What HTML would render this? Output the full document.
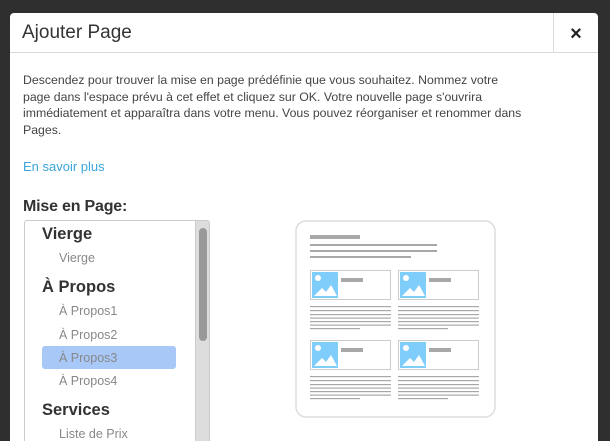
<!DOCTYPE html>
<html style="width:610px;height:441px;overflow:hidden"><head><meta charset="utf-8"><style>
*{margin:0;padding:0;box-sizing:border-box}
body{width:610px;height:441px;overflow:hidden;background:#2f2f2f;font-family:"Liberation Sans",sans-serif;position:relative}
.m{position:absolute;left:10px;top:13px;width:588px;height:428px;background:#fff;border-radius:4px 4px 0 0;overflow:hidden}
.hd{height:40px;border-bottom:1px solid #d8d8d8;position:relative}
.hd h1{position:absolute;left:12px;top:9px;font-size:19px;font-weight:normal;color:#333}
.x{position:absolute;right:0;top:0;width:45px;height:40px;border-left:1px solid #ddd;font-size:20px;font-weight:bold;text-align:center;line-height:42px;color:#222}
.p{position:absolute;left:13px;top:59px;width:503px;font-size:12.3px;line-height:16.6px;color:#444}
.lk{position:absolute;left:13px;top:146px;font-size:13px;color:#3aa6dc}
.lb{position:absolute;left:13px;top:185px;font-size:16px;color:#333;font-weight:bold;letter-spacing:-.2px}
.lst{position:absolute;left:14px;top:207px;width:186px;height:240px;border:1px solid #ccc;border-radius:3px 3px 0 0;overflow:hidden}
.sb{position:absolute;right:0;top:0;width:14px;height:100%;background:#ddd;border-left:1px solid #ccc}
.th{position:absolute;left:3px;top:7px;width:8px;height:113px;background:#999;border-radius:4px}
.g{position:absolute;left:17px;font-size:16.5px;color:#333;font-weight:bold}
.i{position:absolute;left:34px;font-size:12.5px;color:#888}
.sel{position:absolute;left:17px;top:125px;width:134px;height:23px;background:#a8c8f8;border-radius:3px}
</style></head><body>
<div class="m">
<div class="hd"><h1>Ajouter Page</h1><div class="x">×</div></div>
<div class="p">Descendez pour trouver la mise en page prédéfinie que vous souhaitez. Nommez votre page dans l'espace prévu à cet effet et cliquez sur OK. Votre nouvelle page s'ouvrira immédiatement et apparaîtra dans votre menu. Vous pouvez réorganiser et renommer dans Pages.</div>
<div class="lk">En savoir plus</div>
<div class="lb">Mise en Page:</div>
<div class="lst">
<div class="sel"></div>
<div class="g" style="top:4px">Vierge</div>
<div class="i" style="top:30px">Vierge</div>
<div class="g" style="top:57px">À Propos</div>
<div class="i" style="top:83px">À Propos1</div>
<div class="i" style="top:107px">À Propos2</div>
<div class="i" style="top:130px">À Propos3</div>
<div class="i" style="top:153px">À Propos4</div>
<div class="g" style="top:180px">Services</div>
<div class="i" style="top:206px">Liste de Prix</div>
<div class="sb"><div class="th"></div></div>
</div>
<svg style="position:absolute;left:285px;top:207px" width="202" height="200">
<rect x="1" y="1" width="199" height="196" rx="10" fill="#fff" stroke="#ddd" stroke-width="1.5"/>
<rect x="15" y="15" width="50" height="4" fill="#a8a8a8"/>
<rect x="15" y="24" width="127" height="2" fill="#a8a8a8"/>
<rect x="15" y="30" width="127" height="2" fill="#a8a8a8"/>
<rect x="15" y="36" width="101" height="2" fill="#a8a8a8"/>
<g id="blk">
<rect x="15.5" y="50.5" width="80" height="29" fill="#fff" stroke="#ccc"/>
<rect x="17" y="52" width="26" height="26" fill="#7fcdfb"/>
<circle cx="23" cy="58" r="3" fill="#fff"/>
<path d="M19 76 L27 68 L31 72 L36 65 L42 76 Z" fill="#fff"/>
<rect x="46" y="58" width="22" height="4" fill="#a8a8a8"/>
<rect x="15" y="86" width="81" height="1.2" fill="#a8a8a8"/>
<rect x="15" y="90" width="81" height="1.2" fill="#a8a8a8"/>
<rect x="15" y="94" width="81" height="1.2" fill="#a8a8a8"/>
<rect x="15" y="97.5" width="81" height="1.2" fill="#a8a8a8"/>
<rect x="15" y="101" width="81" height="1.2" fill="#a8a8a8"/>
<rect x="15" y="104.5" width="81" height="1.2" fill="#a8a8a8"/>
<rect x="15" y="108" width="50" height="1.2" fill="#a8a8a8"/>
</g>
<use href="#blk" x="88"/>
<use href="#blk" y="70"/>
<use href="#blk" x="88" y="70"/>
</svg>
</div>
</body></html>
